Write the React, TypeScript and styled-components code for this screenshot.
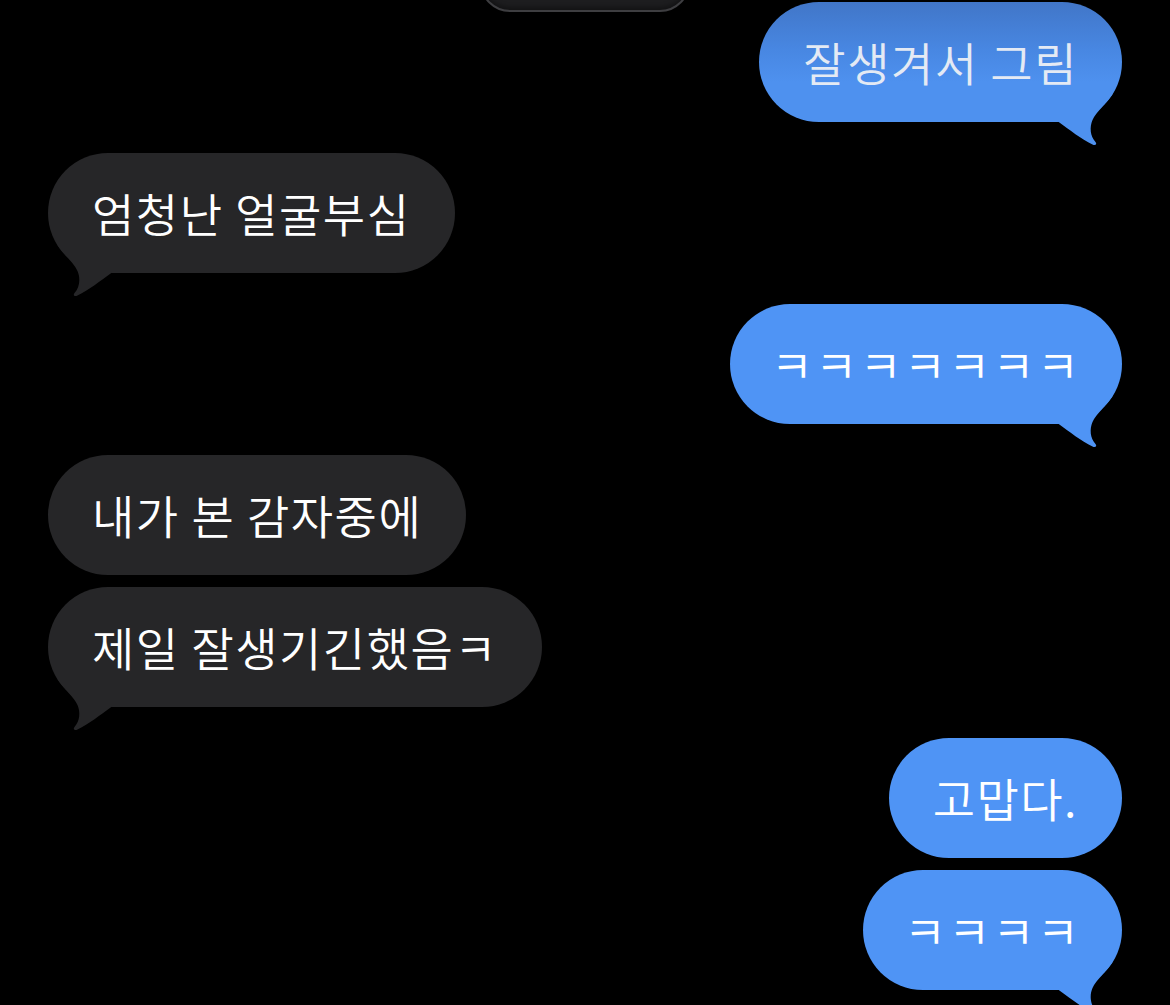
import React from "react";
import styled, { createGlobalStyle } from "styled-components";

const GlobalStyle = createGlobalStyle`
  html, body {
    margin: 0;
    padding: 0;
    background: #000;
    overflow: hidden;
  }
  body {
    font-family: "Noto Sans CJK KR", "Noto Sans", sans-serif;
  }
`;

const Screen = styled.div`
  width: 1170px;
  height: 1005px;
  background: #000;
  overflow: hidden;
  display: flex;
  flex-direction: column;
  padding: 0 48px;
  box-sizing: border-box;
`;

const TopCard = styled.div`
  align-self: center;
  width: 210px;
  height: 50px;
  margin-top: -38px;
  box-sizing: border-box;
  background: #1d1d1f;
  border: 2px solid #3e3e41;
  border-radius: 0 0 30px 30px;
  box-shadow: inset 0 -3px 4px rgba(0, 0, 0, 0.35);
`;

const Row = styled.div<{ $out: boolean; $gap: number }>`
  display: flex;
  justify-content: ${(p) => (p.$out ? "flex-end" : "flex-start")};
  margin-top: ${(p) => p.$gap}px;
`;

const Bubble = styled.div<{ $out: boolean; $top?: boolean; $jamo?: boolean }>`
  position: relative;
  display: inline-flex;
  align-items: center;
  height: 120px;
  padding: 0 ${(p) => (p.$jamo ? "41px 0 41px" : "44px 0 44px")};
  box-sizing: border-box;
  border-radius: 60px;
  background: ${(p) =>
    p.$out
      ? p.$top
        ? "linear-gradient(180deg, #4176c8 0%, #4887e2 40%, #4e91ef 67%, #4e91ef 100%)"
        : "#4f94f5"
      : "#262628"};
  color: ${(p) => (p.$top ? "#e4eaf4" : "#ffffff")};
  font-family: "Noto Sans CJK KR", "Noto Sans", sans-serif;
  font-weight: 350;
  font-size: 46px;
  letter-spacing: ${(p) => (p.$jamo ? "2px" : "1.5px")};
  line-height: 1;
  white-space: nowrap;
`;

const Text = styled.span`
  position: relative;
  z-index: 1;
  transform: translateY(-1px);
`;

const TailSvg = styled.svg<{ $out: boolean }>`
  position: absolute;
  bottom: -24px;
  width: 70px;
  height: 64px;
  ${(p) => (p.$out ? "right: 0;" : "left: 0; transform: scaleX(-1);")}
`;

const Tail = ({ out, color }: { out: boolean; color: string }) => (
  <TailSvg $out={out} viewBox="0 0 70 64">
    <path
      d="M6 0 L66 0 L60 13 C54 22 44 30 40.5 38 C37.5 45 38 54 43.5 60 C45.5 62.5 43 64 40.5 62.5 C29 57 18 48 6 39.5 Z"
      fill={color}
    />
  </TailSvg>
);

type Msg = {
  text: string;
  out: boolean;
  gap: number;
  tail: boolean;
  top?: boolean;
  jamo?: boolean;
};

const messages: Msg[] = [
  { text: "잘생겨서 그림", out: true, gap: -10, tail: true, top: true },
  { text: "엄청난 얼굴부심", out: false, gap: 31, tail: true },
  { text: "ㅋㅋㅋㅋㅋㅋㅋ", out: true, gap: 31, tail: true, jamo: true },
  { text: "내가 본 감자중에", out: false, gap: 31, tail: false },
  { text: "제일 잘생기긴했음ㅋ", out: false, gap: 12, tail: true },
  { text: "고맙다.", out: true, gap: 31, tail: false },
  { text: "ㅋㅋㅋㅋ", out: true, gap: 12, tail: true, jamo: true },
];

export default function App() {
  return (
    <>
      <GlobalStyle />
      <Screen>
        <TopCard />
        {messages.map((m, i) => (
          <Row key={i} $out={m.out} $gap={m.gap}>
            <Bubble $out={m.out} $top={m.top} $jamo={m.jamo}>
              <Text>{m.text}</Text>
              {m.tail && (
                <Tail
                  out={m.out}
                  color={m.out ? (m.top ? "#4e91ef" : "#4f94f5") : "#262628"}
                />
              )}
            </Bubble>
          </Row>
        ))}
      </Screen>
    </>
  );
}
